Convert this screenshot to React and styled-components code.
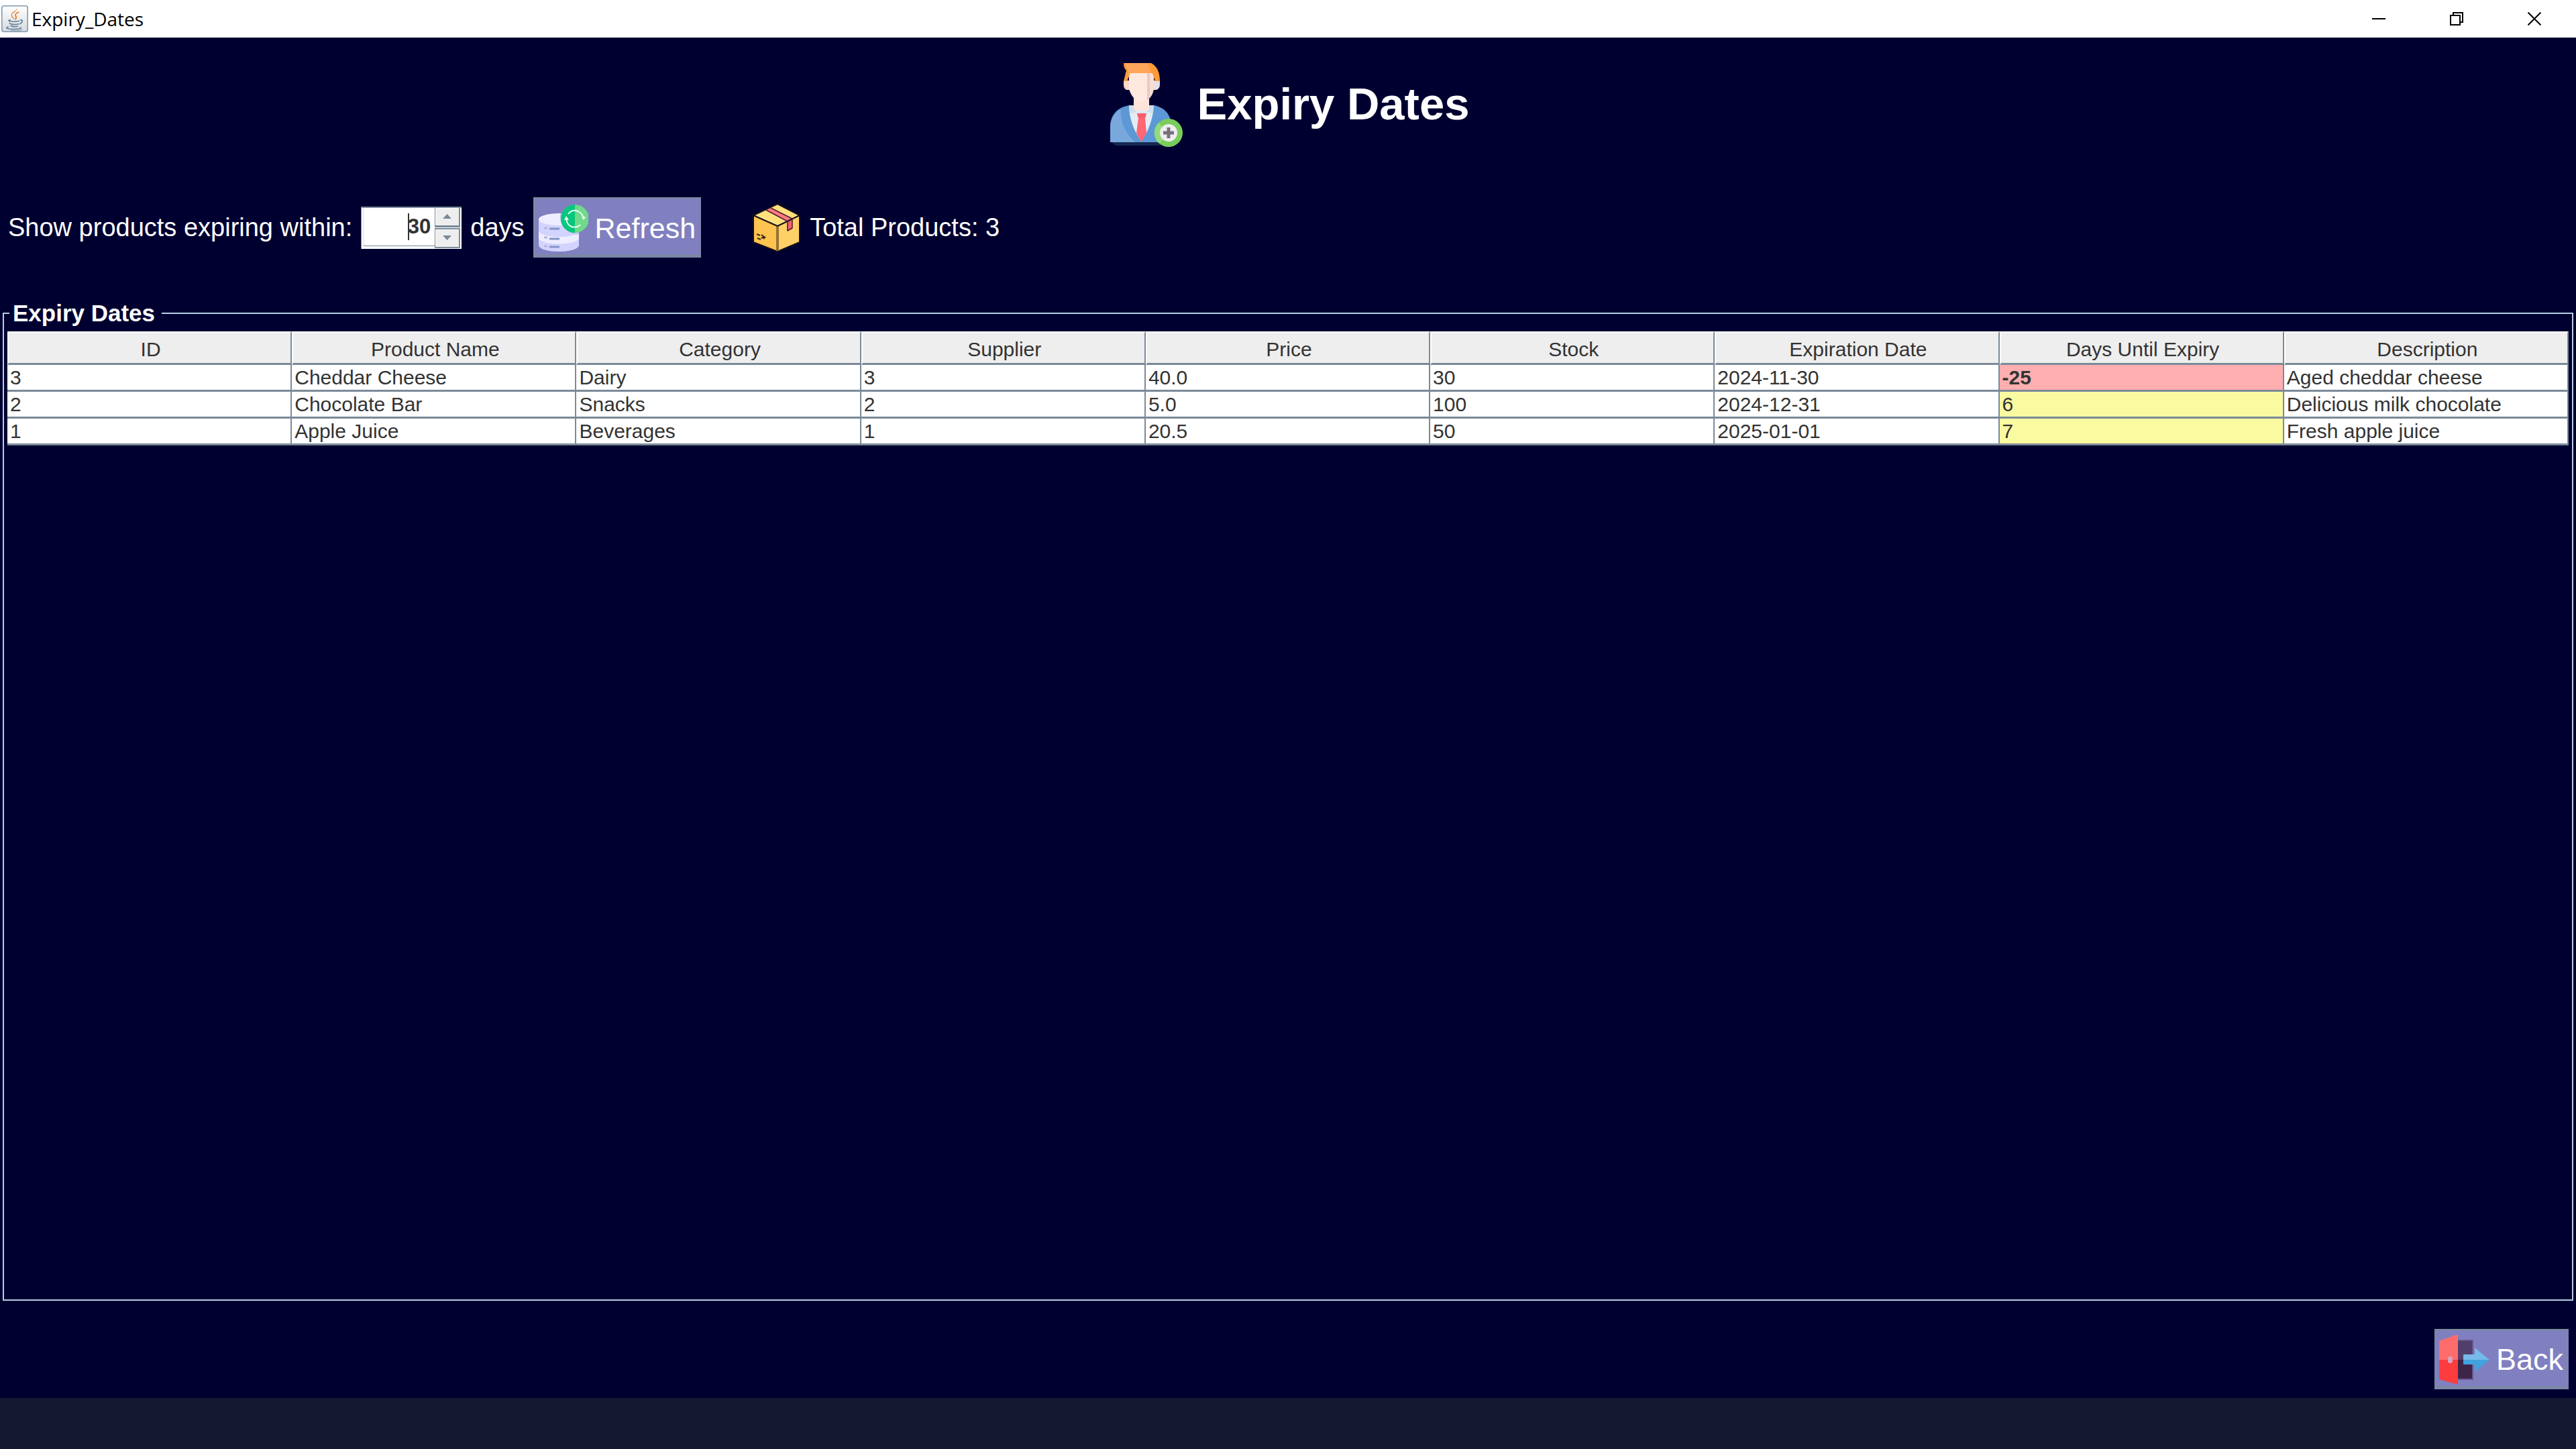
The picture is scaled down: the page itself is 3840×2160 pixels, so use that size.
import React, { useState } from "react";
import styled, { createGlobalStyle } from "styled-components";

const color = {
  navy: "#000030",
  steel: "#7a8a99",
  edge: "#b8cfe5",
  panel: "#eeeeee",
  ink: "#333333",
  lilac: "#8080c0",
};

const GlobalStyle = createGlobalStyle`
  * { box-sizing: border-box; }
  body {
    margin: 0;
    background: ${color.navy};
    font-family: "Liberation Sans", Arial, sans-serif;
  }
  button, input { font-family: inherit; }
`;

const Window = styled.div`
  display: flex;
  flex-direction: column;
  min-height: 100vh;
  background: ${color.navy};
  color: #fff;
`;

const TitleBar = styled.header`
  display: flex;
  align-items: center;
  height: 56px;
  padding: 0 4px 0 2px;
  background: #fff;
  color: #000;
`;

const WindowTitle = styled.span`
  flex: 1;
  padding-left: 5px;
  font-family: "Open Sans", "Noto Sans", sans-serif;
  font-size: 28px;
  line-height: 40px;
`;

const WindowButton = styled.button`
  display: flex;
  align-items: center;
  justify-content: center;
  width: 116px;
  height: 54px;
  padding: 0;
  border: 0;
  background: transparent;
`;

const Heading = styled.h1`
  display: flex;
  align-items: center;
  justify-content: center;
  gap: 10px;
  margin: 0;
  padding: 38px 0 75px;
  font-size: 67px;
  line-height: 76px;
  font-weight: bold;
`;

const HeadingText = styled.span`
  padding-bottom: 4px;
`;

const Toolbar = styled.form`
  display: flex;
  align-items: center;
  gap: 13px;
  padding: 0 12px 63px;
  font-size: 38px;
  line-height: 44px;
`;

const Total = styled.div`
  display: flex;
  align-items: center;
  gap: 12px;
  margin-left: 62px;
`;

const ActionButton = styled.button`
  display: flex;
  align-items: center;
  gap: 10px;
  height: 90px;
  padding: 0 7px 0 5px;
  border: solid ${color.steel};
  border-width: 2px 1px 1px 2px;
  border-right-color: ${color.lilac};
  border-bottom-color: ${color.lilac};
  box-shadow: inset -2px -3px ${color.steel};
  background: ${color.lilac};
  color: #fff;
  font-size: ${(p) => p.$size}px;
  line-height: 50px;
`;

const Spinner = styled.div`
  position: relative;
  display: flex;
  width: 150px;
  height: 63px;
  padding: 0 2px 1px 2px;
  border-top: 2px solid ${color.steel};
  border-left: 1px solid ${color.steel};
  background: #fff;
`;

const SpinnerInput = styled.input`
  flex: 1;
  min-width: 0;
  height: 57px;
  padding: 0 6px 0 0;
  border: 0;
  border-left: 2px solid ${color.panel};
  border-bottom: 1px solid ${color.steel};
  border-radius: 0;
  outline: 0;
  background: #fff;
  color: ${color.ink};
  font-size: 31px;
  font-weight: bold;
  text-align: right;
  appearance: textfield;
  &::-webkit-inner-spin-button,
  &::-webkit-outer-spin-button { appearance: none; margin: 0; }
`;

const Caret = styled.i`
  position: absolute;
  top: 8px;
  right: 78px;
  width: 2px;
  height: 40px;
  background: ${color.ink};
`;

const Steppers = styled.div`
  display: flex;
  flex-direction: column;
  width: 38px;
`;

const Stepper = styled.button`
  display: flex;
  flex: 1;
  align-items: center;
  justify-content: center;
  padding: 0;
  border: solid ${color.steel};
  border-width: ${(p) => (p.$down ? "2px 2px 2px 1px" : "0 2px 3px 1px")};
  margin-top: ${(p) => (p.$down ? "1px" : "0")};
  background: ${color.panel};
  box-shadow: inset 1px 1px #fff;
`;

const Panel = styled.fieldset`
  flex: 1;
  min-width: 0;
  margin: 0 4px;
  padding: 7px 5px 5px;
  border: 2px solid ${color.edge};
`;

const PanelTitle = styled.legend`
  margin-left: 3px;
  padding: 0 10px 0 5px;
  font-size: 35px;
  line-height: 40px;
  font-weight: bold;
`;

const Table = styled.table`
  width: 100%;
  table-layout: fixed;
  border-collapse: separate;
  border-spacing: 0;
  background: #fff;
  color: ${color.ink};
  font-size: 30px;
  line-height: 36px;
`;

const HeadCell = styled.th`
  height: 50px;
  padding: 4px 0 0 3px;
  border: 2px solid #fff;
  border-right-color: ${color.steel};
  border-bottom: 3px solid ${color.steel};
  background: ${color.panel};
  font-weight: normal;
`;

const tone = { expired: "#ffafaf", soon: "#fafaa0" };

const Cell = styled.td`
  height: 40px;
  padding: 1px 4px 0;
  border-right: 2px solid ${color.steel};
  border-bottom: 3px solid ${color.steel};
  background: ${(p) => tone[p.$tone] || "#fff"};
  font-weight: ${(p) => (p.$tone === "expired" ? "bold" : "normal")};
  white-space: nowrap;
`;

const Footer = styled.footer`
  display: flex;
  justify-content: flex-end;
  padding: 42px 11px 13px;
`;

const TaskStrip = styled.div`
  height: 76px;
  background: #141830;
`;

const JavaIcon = () => (
  <svg width="40" height="40" viewBox="0 0 40 40" fill="none" aria-hidden="true">
    <defs>
      <linearGradient id="tile" x2="0" y2="1">
        <stop stopColor="#fff" />
        <stop offset="1" stopColor="#d8dadd" />
      </linearGradient>
    </defs>
    <rect x=".8" y=".8" width="38.4" height="38.4" rx="3" fill="url(#tile)" stroke="#7f9cb3" strokeWidth="1.6" />
    <path d="M23 4C25 9 15 11 16 15C16.500 17.500 19 18.500 19.500 21C15 18 13.500 15 16 11.500C18 9 23 8 23 4Z" fill="#ec7a22" />
    <path d="M26.500 10C21 12 20 14 21.500 16C23 18 22 19.500 20.500 21" stroke="#ec7a22" strokeWidth="1.8" />
    <path d="M14 21.500C9 22.500 10 24 19 24C24 24 26 23.500 27 23M12 26C13 29 23 29 26 27.500M13.500 30C15 32 22 32 25 31M28 22C32 20.500 33 25 27 28" stroke="#5d7f9b" strokeWidth="1.700" />
    <path d="M11 32C5 33 8 35.500 18 35.500C27 35.500 31 34 28 32.500" stroke="#5d7f9b" strokeWidth="1.700" />
    <path d="M14 37.500C22 38.500 30 37.500 31 35" stroke="#8aa3b8" strokeWidth="1.200" />
  </svg>
);

const PersonIcon = () => (
  <svg width="125" height="125" viewBox="0 0 125 125" aria-hidden="true">
    <path d="M8 118H92V120Q90 123 84 123H17Q10 123 8 118Z" fill="#16284f" />
    <path d="M5 118V94C6 75 17 66 33 63H71C85 67 93 73 96 90V118Z" fill="#5c98d6" />
    <path d="M5 118V94C6 82 12 74 21 69C19 88 29 106 42 118Z" fill="#79a9dc" />
    <path d="M33 63H70C69 82 62 103 51 116C40 101 33 82 33 63Z" fill="#e3ebf3" />
    <path d="M33 63H40V69L46 74H57L63 69V63H70L68 75L60 73H44L35 75Z" fill="#cfdeea" />
    <path d="M40 50H63V69Q52 73 40 69Z" fill="#fde3da" />
    <path d="M45 75H59L57 82L59 104L51 118L44 104L47 82Z" fill="#ff6773" />
    <path d="M45 75H59L57 82H47Z" fill="#f75c6c" />
    <path d="M25 26H35V40H29Q25 38 25 32Z" fill="#fbd6c9" />
    <path d="M79 26H68V40H74Q79 38 79 32Z" fill="#e8dfe4" />
    <path d="M33 13H70V37C69 48 61 58 52 58C43 58 35 48 33 38Z" fill="#fee8e0" />
    <path d="M60 13H70V37C69 45 65 52 60 55Z" fill="#e7cbc6" />
    <path d="M64 15H70V37C69 45 67 48 64 52Z" fill="#fbdcd2" />
    <path d="M25 0H66C75 5 79 14 79 27H72L68 15H35L30 27H25L29 11Q25 8 25 0Z" fill="#ff9a38" />
    <path d="M28 0H61L63 7L66 15H35L32 20L31 9Q27 5 28 0Z" fill="#ffa65a" />
    <circle cx="92" cy="104" r="21" fill="#79cd5b" />
    <path d="M77 89A21 21 0 0 0 78 120C88 112 88 98 77 89Z" fill="#93da79" />
    <circle cx="92" cy="104" r="13" fill="#eeedf0" />
    <path d="M92 96V112M84 104H100" stroke="#77717c" strokeWidth="5" />
  </svg>
);

const DatabaseIcon = () => (
  <svg width="75" height="75" viewBox="0 0 75 75" aria-hidden="true">
    <path d="M1 24H61V64C58 76 4 76 1 64Z" fill="#d3d3ff" />
    <path d="M1 43C8 54 54 54 61 43V54C54 64 8 64 1 54Z" fill="#ededff" />
    <ellipse cx="31" cy="25" rx="30" ry="9" fill="#ededff" />
    <path d="M17 39H32M17 54H32M17 66H32" stroke="#8495c5" strokeWidth="3" />
    <path d="M9 38H14M9 52H14M9 65H14" stroke="#b6b6df" strokeWidth="3" />
    <path d="M33 17C32 32 39 45 57 48L61 47V40L35 16Z" fill="#c4c4f4" />
    <circle cx="55" cy="24" r="21" fill="#70d98b" />
    <path d="M55 3A21 21 0 0 0 55 45Z" fill="#08c67e" />
    <path d="M45 17Q51 9 60 13Q67 17 68 24M42 24Q43 33 50 36Q58 38 63 33" fill="none" stroke="#e9fff4" strokeWidth="2" />
    <path d="M65 21H71L68 26ZM39 26L42 20L46 26Z" fill="#e9fff4" />
  </svg>
);

const BoxIcon = () => (
  <svg width="75" height="75" viewBox="0 0 75 75" strokeLinejoin="round" aria-hidden="true">
    <path d="M3 19L39 35V73L3 59Z" fill="#ffc34f" />
    <path d="M72 19L39 35V73L72 59Z" fill="#ffd066" />
    <path d="M39 2L72 19L39 35L3 19Z" fill="#ffe07d" />
    <path d="M22 11L29 8L61 24L54 28Z" fill="#ff7b84" />
    <path d="M53 28L61 24V38L57 41L53 42Z" fill="#f0626e" />
    <path d="M3 19L39 2L72 19V59L39 73L3 59ZM3 19L39 35L72 19" fill="none" stroke="#15101c" strokeWidth="2" />
    <path d="M22 11L54 28V42L61 38V24L29 8" fill="none" stroke="#4b1c2c" strokeWidth="1.500" />
    <path d="M39 36V72" stroke="#967331" strokeWidth="4" />
    <path d="M8 47L13 49M9 53L14 55M15 48L19 51L15 53M18 54L21 51" fill="none" stroke="#382a18" strokeWidth="2" />
  </svg>
);

const DoorIcon = () => (
  <svg width="75" height="75" viewBox="0 0 75 75" aria-hidden="true">
    <path d="M28 8H51V38H28Z" fill="#523e6b" />
    <path d="M28 38H51V68H28Z" fill="#3d2449" />
    <path d="M49 8H51V68H49ZM28 8H51V10H28ZM28 66H51V68H28Z" fill="#68588e" />
    <path d="M0 10L28 0V38H0Z" fill="#ff6c6c" />
    <path d="M0 38H28V75L0 67Z" fill="#fc3d3e" />
    <rect x="13" y="33" width="7" height="10" rx="3" fill="#d4a4bf" />
    <path d="M36 30H53V20L75 38H36Z" fill="#76b9ea" />
    <path d="M36 38H75L53 56V45H36Z" fill="#42a2df" />
  </svg>
);

const Glyph = ({ d }) => (
  <svg width="20" height="20" viewBox="0 0 20 20" fill="none" stroke="#000" strokeWidth="2" aria-hidden="true">
    <path d={d} />
  </svg>
);

const Arrow = ({ d }) => (
  <svg width="13" height="7" viewBox="0 0 13 7" aria-hidden="true">
    <path d={d} fill={color.steel} />
  </svg>
);

const windowButtons = [
  ["Minimize", "M0 10H20"],
  ["Restore", "M1 5H15V19H1ZM5 5V1H19V15H15"],
  ["Close", "M.5 .5L19.500 19.500M19.500 .5L.5 19.500"],
];

const columns = [
  "ID", "Product Name", "Category", "Supplier", "Price",
  "Stock", "Expiration Date", "Days Until Expiry", "Description",
];
const DAYS_COLUMN = 7;

const products = [
  ["3", "Cheddar Cheese", "Dairy", "3", "40.0", "30", "2024-11-30", "-25", "Aged cheddar cheese"],
  ["2", "Chocolate Bar", "Snacks", "2", "5.0", "100", "2024-12-31", "6", "Delicious milk chocolate"],
  ["1", "Apple Juice", "Beverages", "1", "20.5", "50", "2025-01-01", "7", "Fresh apple juice"],
];

const toneOf = (index, value) => {
  if (index !== DAYS_COLUMN) return undefined;
  return Number(value) < 0 ? "expired" : "soon";
};

export default function App() {
  const [days, setDays] = useState(30);

  return (
    <Window>
      <GlobalStyle />
      <TitleBar>
        <JavaIcon />
        <WindowTitle>Expiry_Dates</WindowTitle>
        {windowButtons.map(([name, d]) => (
          <WindowButton key={name} type="button" aria-label={name}>
            <Glyph d={d} />
          </WindowButton>
        ))}
      </TitleBar>

      <Heading>
        <PersonIcon />
        <HeadingText>Expiry Dates</HeadingText>
      </Heading>

      <Toolbar onSubmit={(e) => e.preventDefault()}>
        <label htmlFor="days">Show products expiring within:</label>
        <Spinner>
          <SpinnerInput
            id="days"
            type="number"
            value={days}
            onChange={(e) => setDays(Number(e.target.value))}
          />
          <Caret />
          <Steppers>
            <Stepper type="button" aria-label="More days" onClick={() => setDays(days + 1)}>
              <Arrow d="M0 7L6.500 0L13 7Z" />
            </Stepper>
            <Stepper $down type="button" aria-label="Fewer days" onClick={() => setDays(days - 1)}>
              <Arrow d="M0 0H13L6.500 7Z" />
            </Stepper>
          </Steppers>
        </Spinner>
        <span>days</span>
        <ActionButton $size={43} type="submit">
          <DatabaseIcon />
          Refresh
        </ActionButton>
        <Total>
          <BoxIcon />
          <span>Total Products: {products.length}</span>
        </Total>
      </Toolbar>

      <Panel>
        <PanelTitle>Expiry Dates</PanelTitle>
        <Table>
          <thead>
            <tr>
              {columns.map((name) => (
                <HeadCell key={name} scope="col">{name}</HeadCell>
              ))}
            </tr>
          </thead>
          <tbody>
            {products.map((row) => (
              <tr key={row[0]}>
                {row.map((value, i) => (
                  <Cell key={columns[i]} $tone={toneOf(i, value)}>{value}</Cell>
                ))}
              </tr>
            ))}
          </tbody>
        </Table>
      </Panel>

      <Footer>
        <ActionButton $size={45} type="button">
          <DoorIcon />
          Back
        </ActionButton>
      </Footer>
      <TaskStrip />
    </Window>
  );
}
